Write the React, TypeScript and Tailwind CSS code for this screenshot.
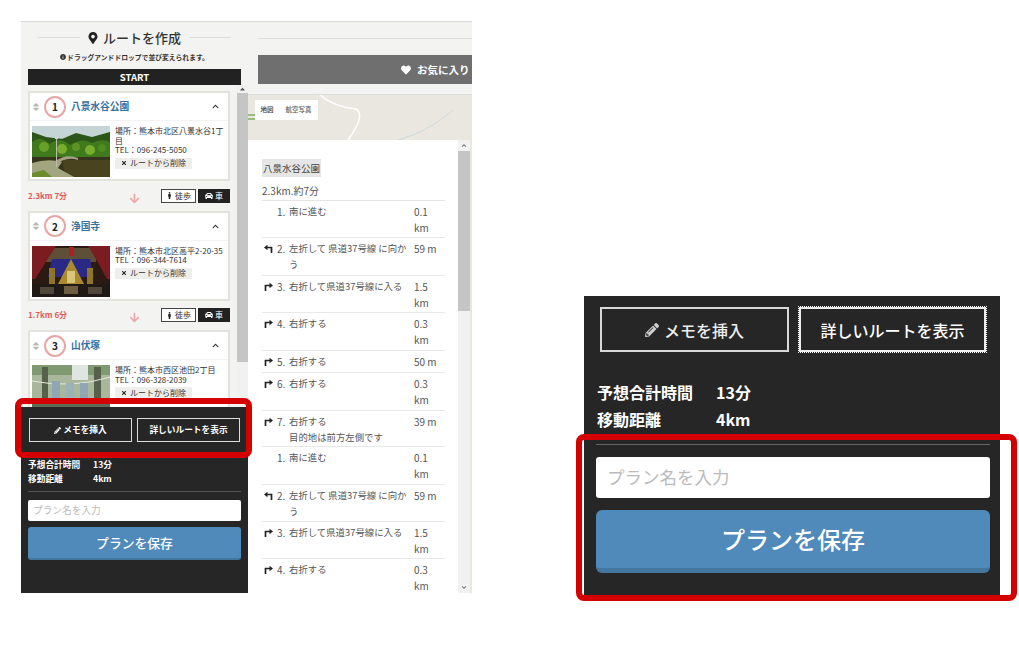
import { FaMapMarkerAlt, FaInfoCircle, FaChevronUp, FaChevronDown, FaPencilAlt, FaCar, FaMale, FaHeart, FaTimes, FaSort, FaArrowDown, FaCaretUp } from "react-icons/fa";

function ParkPhoto() {
  return (
    <svg viewBox="0 0 78 51" className="block h-[51px] w-[78px] shrink-0 blur-[0.4px]" preserveAspectRatio="none">
      <rect width="78" height="51" fill="#a9c0cc" />
      <rect width="78" height="12" fill="#c5d5d6" />
      <path d="M0 6 L14 11 L30 13 L44 7 L60 11 L78 6 V40 H0 Z" fill="#2c5518" />
      <path d="M0 16 Q8 9 18 18 Q28 10 38 19 Q50 11 60 17 Q70 12 78 16 V33 H0 Z" fill="#3f7a1c" />
      <circle cx="12" cy="21" r="5" fill="#68a028" />
      <circle cx="30" cy="23" r="5" fill="#79ad2e" />
      <circle cx="44" cy="21" r="4" fill="#5c9426" />
      <circle cx="58" cy="24" r="5" fill="#79ad2e" />
      <circle cx="70" cy="22" r="4" fill="#4f8a22" />
      <rect y="31" width="78" height="20" fill="#37351b" />
      <path d="M32 34 H78 V51 H38 Q28 42 32 34 Z" fill="#4a4320" />
      <path d="M0 37 Q16 32 30 36 L26 42 L42 51 H0 Z" fill="#a3a580" />
      <path d="M0 47 L12 44 L20 51 H0Z" fill="#6b8d2c" />
      <path d="M22 36 Q34 27 46 32 L46 34 Q34 30 24 39 Z" fill="#a89f80" />
      <rect x="24" y="11" width="1" height="30" fill="#b9bcae" />
      <rect x="23" y="11" width="3" height="2" fill="#d5d7cb" />
    </svg>
  );
}

function TemplePhoto() {
  return (
    <svg viewBox="0 0 78 51" className="block h-[51px] w-[78px] shrink-0 blur-[0.4px]" preserveAspectRatio="none">
      <rect width="78" height="51" fill="#2b1a12" />
      <rect x="14" y="2" width="50" height="14" fill="#5e5038" />
      <rect x="37" y="1" width="5" height="9" fill="#b01e26" />
      <path d="M0 0 H24 Q14 16 3 33 H0 Z" fill="#7a1c20" />
      <path d="M78 0 H56 Q66 16 75 33 H78 Z" fill="#7a1c20" />
      <path d="M20 13 H58 L62 31 H16 Z" fill="#2a2a86" />
      <path d="M39 13 L52 38 H26 Z" fill="#a98a30" />
      <rect x="17" y="22" width="6" height="17" fill="#8d7628" />
      <rect x="55" y="22" width="6" height="17" fill="#8d7628" />
      <rect x="35" y="25" width="8" height="12" fill="#d8c67a" />
      <rect y="38" width="78" height="13" fill="#1f1a15" />
      <rect x="8" y="41" width="14" height="7" fill="#51463a" />
      <rect x="32" y="40" width="14" height="8" fill="#6e5d40" />
      <rect x="56" y="41" width="14" height="7" fill="#51463a" />
    </svg>
  );
}

function MoundPhoto() {
  return (
    <svg viewBox="0 0 78 51" className="block h-[51px] w-[78px] shrink-0 blur-[0.4px]" preserveAspectRatio="none">
      <rect width="78" height="51" fill="#a9b79c" />
      <rect width="78" height="10" fill="#7f9a70" />
      <rect x="40" width="16" height="15" fill="#dfe5e0" />
      <rect x="10" y="2" width="6" height="40" fill="#57604a" />
      <rect x="62" y="2" width="7" height="40" fill="#57604a" />
      <path d="M0 16 Q40 24 78 12" stroke="#e8e8dc" strokeWidth="1" fill="none" />
      <rect x="20" y="16" width="8" height="20" fill="#8fa6b4" />
      <rect x="34" y="18" width="8" height="20" fill="#9db2b6" />
      <rect x="48" y="18" width="8" height="20" fill="#8fa6b4" />
      <rect y="36" width="78" height="15" fill="#5e6c56" />
    </svg>
  );
}

function Card({ no, name, lines, photo }: { no: number; name: string; lines: string[]; photo: React.ReactNode }) {
  return (
    <div className="h-[90px] shrink-0 border-2 border-[#e3e3dd] bg-white">
      <div className="flex h-[28px] items-center border-b border-[#f3f3f3] pl-[2px] pr-[9px]">
        <FaSort className="h-[10px] w-[8px] text-[#b9b9b0]" />
        <span className="ml-[4px] flex h-[22px] w-[22px] items-center justify-center rounded-full border-2 border-[#e8a5a5] text-[10px] font-bold text-[#222]">{no}</span>
        <span className="ml-[5px] flex-1 text-[9.7px] font-bold text-[#35719f]">{name}</span>
        <FaChevronUp className="h-[7px] w-[7px] text-[#333]" />
      </div>
      <div className="flex gap-[5px] pl-[2px] pt-[5px]">
        {photo}
        <div className="w-[112px] text-[8px] leading-[9.6px] text-[#333]">
          {lines.map((l) => (
            <div key={l}>{l}</div>
          ))}
          <div className="mt-[3px] flex h-[11px] w-[77px] items-center justify-center gap-[3px] bg-[#eeeeec] text-[8px] leading-none">
            <FaTimes className="h-[6px] w-[6px] text-[#222]" />
            <span>ルートから削除</span>
          </div>
        </div>
      </div>
    </div>
  );
}

function RouteLeg({ text }: { text: string }) {
  return (
    <div className="flex h-[29.5px] shrink-0 items-center">
      <span className="w-[101px] text-[8px] font-bold text-[#e05a5a]">{text}</span>
      <FaArrowDown className="mt-[5px] h-[11px] w-[11px] text-[#eda9a9]" />
      <span className="ml-[21px] flex h-[14px] w-[35px] items-center justify-center gap-[2px] border border-[#444] bg-white text-[8px] leading-none text-[#222]">
        <FaMale className="h-[7px] w-[7px]" />
        徒歩
      </span>
      <span className="ml-[2px] flex h-[14px] w-[32px] items-center justify-center gap-[2px] bg-[#222] text-[8px] leading-none text-white">
        <FaCar className="h-[8px] w-[8px]" />
        車
      </span>
    </div>
  );
}

function Actions({ big }: { big?: boolean }) {
  return big ? (
    <div className="flex gap-[10px] pl-[16px]">
      <div className="mt-[1px] flex h-[45px] w-[189px] items-center justify-center gap-[5px] border-2 border-[#d8d8d8] text-[16px] font-medium text-[#eee]">
        <FaPencilAlt className="h-[14px] w-[14px] text-[#ccc]" />
        メモを挿入
      </div>
      <div className="mt-[1px] flex h-[45px] w-[187px] items-center justify-center border-2 border-[#eee] text-[16px] font-medium text-white outline outline-1 outline-dotted outline-white">詳しいルートを表示</div>
    </div>
  ) : (
    <div className="flex gap-[5px] pl-[8px]">
      <div className="flex h-[24px] w-[103px] items-center justify-center gap-[2px] border border-[#ddd] text-[8.7px] font-bold text-white">
        <FaPencilAlt className="h-[7px] w-[7px]" />
        メモを挿入
      </div>
      <div className="flex h-[24px] w-[103px] items-center justify-center border border-[#ddd] text-[8.7px] font-bold text-white">詳しいルートを表示</div>
    </div>
  );
}

function Turn({ dir }: { dir?: "l" | "r" }) {
  if (!dir) return <span className="w-[9px] shrink-0" />;
  return (
    <svg viewBox="0 0 9 9" className={`mt-[3px] h-[9px] w-[9px] shrink-0 ${dir === "l" ? "-scale-x-100" : ""}`}>
      <path d="M1.5 9 V3.5 H6" stroke="#222" strokeWidth="1.7" fill="none" />
      <path d="M5.5 0.8 L9 3.5 L5.5 6.2 Z" fill="#222" />
    </svg>
  );
}

const steps: { d?: "l" | "r"; n: number; t: string; t2?: string; m: string; m2?: string; h: string }[] = [
  { n: 1, t: "南に進む", m: "0.1", m2: "km", h: "h-[37px]" },
  { d: "l", n: 2, t: "左折して 県道37号線 に向か", t2: "う", m: "59 m", h: "h-[38px]" },
  { d: "r", n: 3, t: "右折して県道37号線に入る", m: "1.5", m2: "km", h: "h-[37px]" },
  { d: "r", n: 4, t: "右折する", m: "0.3", m2: "km", h: "h-[38px]" },
  { d: "r", n: 5, t: "右折する", m: "50 m", h: "h-[22px]" },
  { d: "r", n: 6, t: "右折する", m: "0.3", m2: "km", h: "h-[38px]" },
  { d: "r", n: 7, t: "右折する", t2: "目的地は前方左側です", m: "39 m", h: "h-[36px]" },
  { n: 1, t: "南に進む", m: "0.1", m2: "km", h: "h-[38px]" },
  { d: "l", n: 2, t: "左折して 県道37号線 に向か", t2: "う", m: "59 m", h: "h-[37px]" },
  { d: "r", n: 3, t: "右折して県道37号線に入る", m: "1.5", m2: "km", h: "h-[37px]" },
  { d: "r", n: 4, t: "右折する", m: "0.3", m2: "km", h: "h-[38px]" },
];

export default function App() {
  return (
    <div className="relative flex h-[662px] w-[1019px] overflow-hidden bg-white font-['Noto_Sans_CJK_JP','Noto_Sans',sans-serif]">
      {/* left figure */}
      <div className="ml-[21px] mt-[21px] flex h-[572px] w-[451px] shrink-0 overflow-hidden border-t border-[#d9d9d6]">
        <div className="flex h-full w-[227px] shrink-0 flex-col bg-[#f3f3f1]">
          <div className="flex h-[47px] shrink-0 flex-col">
            <div className="flex h-[30px] items-center justify-center gap-[8px] pt-[1px] text-[13px] font-medium text-[#333]">
              <span className="h-px w-[42px] bg-[#dcdcd8]" />
              <span className="flex items-center gap-[5px] whitespace-nowrap">
                <FaMapMarkerAlt className="h-[12px] w-[10px] text-[#222]" />
                ルートを作成
              </span>
              <span className="h-px w-[42px] bg-[#dcdcd8]" />
            </div>
            <div className="flex items-center justify-center gap-px text-[6.8px] font-bold leading-[10px] text-[#333]">
              <FaInfoCircle className="h-[6px] w-[6px]" />
              ドラッグアンドドロップで並び変えられます。
            </div>
          </div>
          <div className="mx-[7px] flex h-[16px] shrink-0 items-center justify-center bg-[#222] text-[9.5px] font-bold text-white">START</div>
          <div className="flex h-[322px] shrink-0 overflow-hidden pt-[6px]">
            <div className="ml-[7px] flex w-[202px] shrink-0 flex-col overflow-hidden">
              <Card no={1} name="八景水谷公園" photo={<ParkPhoto />} lines={["場所：熊本市北区八景水谷1丁目", "TEL：096-245-5050"]} />
              <RouteLeg text="2.3km 7分" />
              <Card no={2} name="浄国寺" photo={<TemplePhoto />} lines={["場所：熊本市北区高平2-20-35", "TEL：096-344-7614"]} />
              <RouteLeg text="1.7km 6分" />
              <Card no={3} name="山伏塚" photo={<MoundPhoto />} lines={["場所：熊本市西区池田2丁目", "TEL：096-328-2039"]} />
            </div>
            <div className="ml-[7px] -mt-[6px] flex w-[11px] shrink-0 flex-col bg-[#f1f1f1]">
              <FaCaretUp className="h-[8px] w-[11px] text-[#555]" />
              <div className="h-[269px] shrink-0 bg-[#c5c5c5]" />
            </div>
          </div>
          <div className="flex flex-1 flex-col bg-[#262626] pt-[11px]">
            <Actions />
            <div className="mt-[16px] flex flex-col gap-[1px] pl-[7px] text-[8.7px] font-bold leading-[13px] text-white">
              <div className="flex"><span className="w-[65px]">予想合計時間</span>13分</div>
              <div className="flex"><span className="w-[65px]">移動距離</span>4km</div>
            </div>
            <div className="mx-[7px] mt-[6px] h-px bg-[#555]" />
            <div className="mx-[7px] mt-[8px] flex h-[21px] items-center rounded-[2px] bg-white pl-[5px] text-[9.7px] text-[#bbb]">プラン名を入力</div>
            <div className="mx-[7px] mt-[6px] flex h-[33px] items-center justify-center rounded-[3px] border-b-2 border-[#44779f] bg-[#4f8abb] text-[12.8px] font-medium text-white">プランを保存</div>
          </div>
        </div>

        <div className="flex h-full w-[224px] shrink-0 flex-col bg-[#e9e7e0]">
          <div className="flex h-[73px] shrink-0 flex-col border-b border-[#dcdcd8] bg-[#f3f3f1] pl-[10px]">
            <div className="mt-[16px] h-px bg-[#dcdcd8]" />
            <div className="mt-[16px] flex h-[29px] items-center gap-[6px] whitespace-nowrap bg-[#6f6f6f] pl-[143px] text-[10.5px] font-bold text-white">
              <FaHeart className="h-[10px] w-[10px] shrink-0" />
              <span>お気に入り</span>
            </div>
          </div>
          <div className="relative flex h-[45px] shrink-0 items-start overflow-hidden bg-[#e9e7e0] pl-[7px] pt-[5px]">
            <svg viewBox="0 0 224 45" className="absolute inset-0 h-[45px] w-[224px]">
              <path d="M72 0 Q86 12 108 14 Q118 20 100 45" stroke="#fff" strokeWidth="1.5" fill="none" />
              <path d="M205 15 Q185 32 165 40 L150 45" stroke="#cdd9dc" strokeWidth="1" fill="none" />
              <path d="M0 24 H12 M0 20 H10" stroke="#7fb05c" strokeWidth="1.5" />
            </svg>
            <div className="relative flex h-[20px] w-[63px] items-center bg-white text-[6.5px] font-medium text-[#333]">
              <span className="w-[24px] text-center">地図</span>
              <span className="flex-1 text-center text-[#555]">航空写真</span>
            </div>
          </div>
          <div className="flex min-h-0 flex-1">
            <div className="w-[210px] shrink-0 overflow-hidden bg-white pl-[14px] pr-[13px] pt-[19px] text-[#555]">
              <div className="flex h-[18px] w-[59px] items-center justify-center whitespace-nowrap bg-[#e6e6e6] text-[9.5px] text-[#444]">八景水谷公園</div>
              <div className="mt-[5px] h-[19px] border-b border-[#e4e4e4] text-[10px] leading-[18px]">2.3km.約7分</div>
              {steps.map((s, i) => (
                <div key={i} className={`flex ${s.h} shrink-0 border-b border-[#e8e8e8] pl-[2px] pt-[3px] text-[9.4px] leading-[15.5px]`}>
                  <Turn dir={s.d} />
                  <span className="ml-[4px] w-[12px] shrink-0 text-[10px]">{s.n}.</span>
                  <span className="w-[125px] shrink-0">
                    <span className="block whitespace-nowrap">{s.t}</span>
                    {s.t2 && <span className="block whitespace-nowrap">{s.t2}</span>}
                  </span>
                  <span className="shrink-0 text-[10px]">
                    <span className="block">{s.m}</span>
                    {s.m2 && <span className="block">{s.m2}</span>}
                  </span>
                </div>
              ))}
            </div>
            <div className="flex w-[12px] shrink-0 flex-col bg-[#f1f1f1]">
              <FaChevronUp className="my-[3px] h-[5px] w-[12px] text-[#555]" />
              <div className="h-[160px] bg-[#c5c5c5]" />
              <div className="flex-1" />
              <FaChevronDown className="my-[3px] h-[5px] w-[12px] text-[#555]" />
            </div>
          </div>
        </div>
      </div>

      {/* right figure */}
      <div className="ml-[112px] mt-[296px] flex h-[300px] w-[416px] shrink-0 flex-col bg-[#262626] pt-[10px]">
        <Actions big />
        <div className="mt-[28px] flex flex-col gap-[3px] pl-[13px] text-[16px] font-bold leading-[24px] text-white">
          <div className="flex"><span className="w-[119px]">予想合計時間</span>13分</div>
          <div className="flex"><span className="w-[119px]">移動距離</span>4km</div>
        </div>
        <div className="ml-[12px] mr-[10px] mt-[13px] h-px bg-[#666]" />
        <div className="ml-[12px] mr-[10px] mt-[12px] flex h-[41px] shrink-0 items-center rounded-[3px] bg-white pl-[11px] text-[17.5px] text-[#bbb]">プラン名を入力</div>
        <div className="ml-[12px] mr-[10px] mt-[12px] flex h-[63px] shrink-0 items-center justify-center rounded-[6px] border-b-[5px] border-[#44779f] bg-[#4f8abb] text-[24px] font-medium text-white">プランを保存</div>
      </div>

      {/* red highlight overlays */}
      <div className="pointer-events-none absolute left-[15px] top-[398px] h-[60px] w-[237px] rounded-[8px] border-[6px] border-[#d40000]" />
      <div className="pointer-events-none absolute left-[576px] top-[434px] h-[167px] w-[441px] rounded-[8px] border-[6px] border-[#d40000]" />
    </div>
  );
}
